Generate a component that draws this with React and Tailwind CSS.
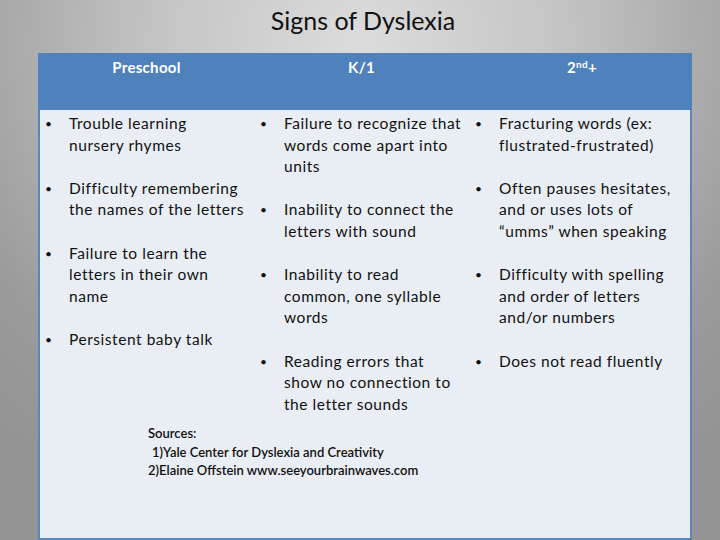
import React from "react";

const cols = [
  [
    ["Trouble learning", "nursery rhymes"],
    ["Difficulty remembering", "the names of the letters"],
    ["Failure to learn the", "letters in their own", "name"],
    ["Persistent baby talk"],
  ],
  [
    ["Failure to recognize that", "words come apart into", "units"],
    ["Inability to connect the", "letters with sound"],
    ["Inability to read", "common, one syllable", "words"],
    ["Reading errors that", "show no connection to", "the letter sounds"],
  ],
  [
    ["Fracturing words (ex:", "flustrated-frustrated)"],
    ["Often pauses hesitates,", "and or uses lots of", "\u201cumms\u201d when speaking"],
    ["Difficulty with spelling", "and order of letters", "and/or numbers"],
    ["Does not read fluently"],
  ],
];

function Column({ items }) {
  return (
    <div className="flex flex-col gap-[21.6px] pt-[3px] pl-[7px]">
      {items.map((it, i) => (
        <div key={i} className="flex">
          <span className="w-[24px] shrink-0 text-[12px]">•</span>
          <span className="whitespace-nowrap">
            {it.map((l, j) => (
              <div key={j}>{l}</div>
            ))}
          </span>
        </div>
      ))}
    </div>
  );
}

export default function App() {
  return (
    <div
      className="w-[720px] h-[540px] flex flex-col overflow-hidden bg-[radial-gradient(ellipse_75%_95%_at_50%_8%,#dcdcdc_0%,#c6c6c6_35%,#9b9b9b_80%,#949494_100%)]"
      style={{ fontFamily: "Lato, 'Open Sans', sans-serif" }}
    >
      <div className="h-[53px] flex items-center justify-center pb-[11px] pl-[6px] text-[25px] text-[#111]">
        Signs of Dyslexia
      </div>
      <div className="ml-[38px] w-[654px] flex-1 flex flex-col">
        <div className="h-[57px] bg-[#4f81bd] grid grid-cols-[215px_215px_224px] text-white font-bold text-[15px] tracking-[0.3px] leading-[21.6px] pt-[4px]">
          <div className="text-center pl-[2px]">Preschool</div>
          <div className="text-center pl-[2px]">K/1</div>
          <div className="text-center pl-[4px]">
            2<sup className="text-[10px] font-bold">nd</sup>+
          </div>
        </div>
        <div className="flex-1 bg-[#e9edf4] border-x-2 border-b-2 border-[#5a85bd] text-[15.5px] tracking-[0.55px] leading-[21.6px] text-[#111]">
          <div className="grid grid-cols-[215px_215px_222px] -ml-[2px]">
            {cols.map((c, i) => (
              <Column key={i} items={c} />
            ))}
          </div>
          <div className="mt-[9px] ml-[108px] text-[13px] tracking-normal leading-[18.5px] font-semibold text-[#111]">
            <div>Sources:</div>
            <div className="pl-[4px]">1)Yale Center for Dyslexia and Creativity</div>
            <div>2)Elaine Offstein www.seeyourbrainwaves.com</div>
          </div>
        </div>
      </div>
    </div>
  );
}
